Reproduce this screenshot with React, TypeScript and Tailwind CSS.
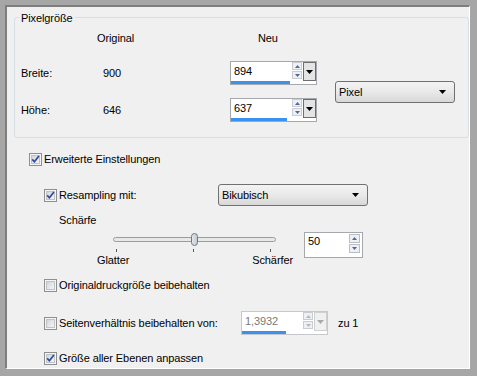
import React from 'react';

const Check = ({ checked }: { checked?: boolean }) => (
  <svg width="13" height="13" viewBox="0 0 13 13" className="shrink-0">
    <defs>
      <linearGradient id="cbg" x1="0" y1="0" x2="1" y2="1">
        <stop offset="0" stopColor="#cfd3da" />
        <stop offset="1" stopColor="#f7f7f7" />
      </linearGradient>
    </defs>
    <rect x="0.5" y="0.5" width="12" height="12" fill="#f5f5f5" stroke="#8e8f8f" />
    <rect x="2.5" y="2.5" width="8" height="8" fill="url(#cbg)" stroke="#bfc3c8" />
    {checked && (
      <path d="M3.2 6.4 L5.4 8.8 L9.9 2.9" fill="none" stroke="#2d4a9d" strokeWidth="1.7" />
    )}
  </svg>
);

const Down = ({ color = '#000' }: { color?: string }) => (
  <svg width="7" height="4" viewBox="0 0 7 4">
    <polygon points="0,0 7,0 3.5,4" fill={color} />
  </svg>
);

const Arrow = ({ up, color }: { up?: boolean; color: string }) => (
  <svg width="5" height="3" viewBox="0 0 5 3">
    <polygon points={up ? '0,3 5,3 2.5,0' : '0,0 5,0 2.5,3'} fill={color} />
  </svg>
);

const SpinBox = ({ value, bar, disabled }: { value: string; bar: number; disabled?: boolean }) => {
  const arrow = disabled ? '#b5b9bf' : '#4d6a9c';
  return (
    <div
      className={`flex flex-col w-[87px] h-[24px] border bg-white ${
        disabled ? 'border-[#c5c8cc]' : 'border-[#a5a8ad]'
      }`}
    >
      <div className="flex flex-1">
        <span className={`flex-1 pl-[3px] pt-[2px] ${disabled ? 'text-[#7a7a7a]' : 'text-black'}`}>{value}</span>
        <div className="flex flex-col w-[11px] gap-[1px] pt-[0px]">
          <div className="flex items-center justify-center h-[8px] w-[10px] border border-[#c9ccd2] bg-[#eef0f3]">
            <Arrow up color={arrow} />
          </div>
          <div className="flex items-center justify-center h-[8px] w-[10px] border border-[#c9ccd2] bg-[#eef0f3]">
            <Arrow color={arrow} />
          </div>
        </div>
        <div
          className={`flex items-center justify-center w-[13px] border ${
            disabled ? 'border-[#d0d0d0] bg-[#f0f0f0]' : 'border-[#6e6e6e] bg-[#e4e4e4]'
          }`}
        >
          <Down color={disabled ? '#a8a8a8' : '#000'} />
        </div>
      </div>
      <div className="h-[3px]">
        <div className="h-full bg-[#3a92ec]" style={{ width: bar }} />
      </div>
    </div>
  );
};

const Combo = ({ label, width }: { label: string; width: number }) => (
  <div
    className="flex items-center justify-between h-[22px] rounded-[3px] border border-[#707070] bg-linear-to-b from-[#f3f3f3] via-[#e9e9e9] to-[#d8d8d8] pl-[3px] pr-[8px]"
    style={{ width }}
  >
    <span>{label}</span>
    <Down />
  </div>
);

export default function App() {
  return (
    <div className="w-[477px] h-[376px] bg-[#a6a6a6] pt-[5px] pl-[5px] pr-[7px] pb-[7px] font-['Liberation_Sans',Arial,sans-serif] text-[11px] leading-[14px] tracking-[-0.1px] text-black">
      <div className="flex flex-col h-full border-t-2 border-l-2 border-[#7e7e7e] border-r border-b border-r-white border-b-white bg-[#f0f0f0]">
        {/* Pixelgröße */}
        <div className="relative mt-[10px] ml-[7px] h-[121px] w-[455px] rounded-[3px] border border-[#d5dfe5] pl-[6px] pt-[13px]">
          <span className="absolute -top-[7px] left-[4px] bg-[#f0f0f0] px-[2px]">Pixelgröße</span>
          <div className="flex pl-[76px]">
            <span className="w-[161px]">Original</span>
            <span>Neu</span>
          </div>
          <div className="flex mt-[16px]">
            <div className="flex flex-col gap-[13px]">
              <div className="flex items-center h-[24px]">
                <span className="w-[82px]">Breite:</span>
                <span className="w-[127px]">900</span>
                <SpinBox value="894" bar={59} />
              </div>
              <div className="flex items-center h-[24px]">
                <span className="w-[82px]">Höhe:</span>
                <span className="w-[127px]">646</span>
                <SpinBox value="637" bar={56} />
              </div>
            </div>
            <div className="flex items-center ml-[18px]">
              <Combo label="Pixel" width={120} />
            </div>
          </div>
        </div>

        {/* Erweiterte Einstellungen */}
        <div className="flex items-center h-[14px] mt-[14px] ml-[22px] gap-[2px]">
          <Check checked />
          <span>Erweiterte Einstellungen</span>
        </div>

        <div className="flex items-center h-[22px] mt-[18px] ml-[37px]">
          <div className="flex items-center gap-[2px] w-[174px]">
            <Check checked />
            <span>Resampling mit:</span>
          </div>
          <Combo label="Bikubisch" width={150} />
        </div>

        <div className="h-[14px] mt-[7px] ml-[52px]">Schärfe</div>

        <div className="flex items-start mt-[5px] ml-[90px]">
          <div className="flex flex-col w-[196px]">
            <div className="relative mt-[5px] ml-[16px] w-[163px] h-[5px] rounded-full border border-[#9c9c9c] bg-[#e6e8ea]">
              <div className="absolute -top-[5px] left-[77px] w-[7px] h-[13px] rounded-full border border-[#6f7680] bg-linear-to-r from-[#e3e6ea] to-[#c4cad2]" />
            </div>
            <div className="flex h-[3px] mt-[7px]">
              <div className="ml-[19px] w-px bg-[#555]" />
              <div className="ml-[76px] w-px bg-[#555]" />
              <div className="ml-[76px] w-px bg-[#555]" />
            </div>
            <div className="flex justify-between mt-[1px]">
              <span>Glatter</span>
              <span>Schärfer</span>
            </div>
          </div>
          <div className="flex ml-[11px] w-[59px] h-[26px] border border-[#a5a8ad] bg-white">
            <span className="flex-1 pl-[3px] pt-[1px]">50</span>
            <div className="flex flex-col gap-[1px] pt-[1px] pr-[2px]">
              <div className="flex items-center justify-center h-[9px] w-[11px] border border-[#b9bec6] bg-[#eef0f3]">
                <Arrow up color="#4d6a9c" />
              </div>
              <div className="flex items-center justify-center h-[9px] w-[11px] border border-[#b9bec6] bg-[#eef0f3]">
                <Arrow color="#4d6a9c" />
              </div>
            </div>
          </div>
        </div>

        <div className="flex items-center h-[14px] mt-[11px] ml-[37px] gap-[2px]">
          <Check />
          <span>Originaldruckgröße beibehalten</span>
        </div>

        <div className="flex items-center h-[24px] mt-[19px] ml-[37px]">
          <div className="flex items-center gap-[2px] w-[197px]">
            <Check />
            <span>Seitenverhältnis beibehalten von:</span>
          </div>
          <SpinBox value="1,3932" bar={44} disabled />
          <span className="ml-[10px]">zu 1</span>
        </div>

        <div className="flex items-center h-[14px] mt-[16px] ml-[37px] gap-[2px]">
          <Check checked />
          <span>Größe aller Ebenen anpassen</span>
        </div>
      </div>
    </div>
  );
}
